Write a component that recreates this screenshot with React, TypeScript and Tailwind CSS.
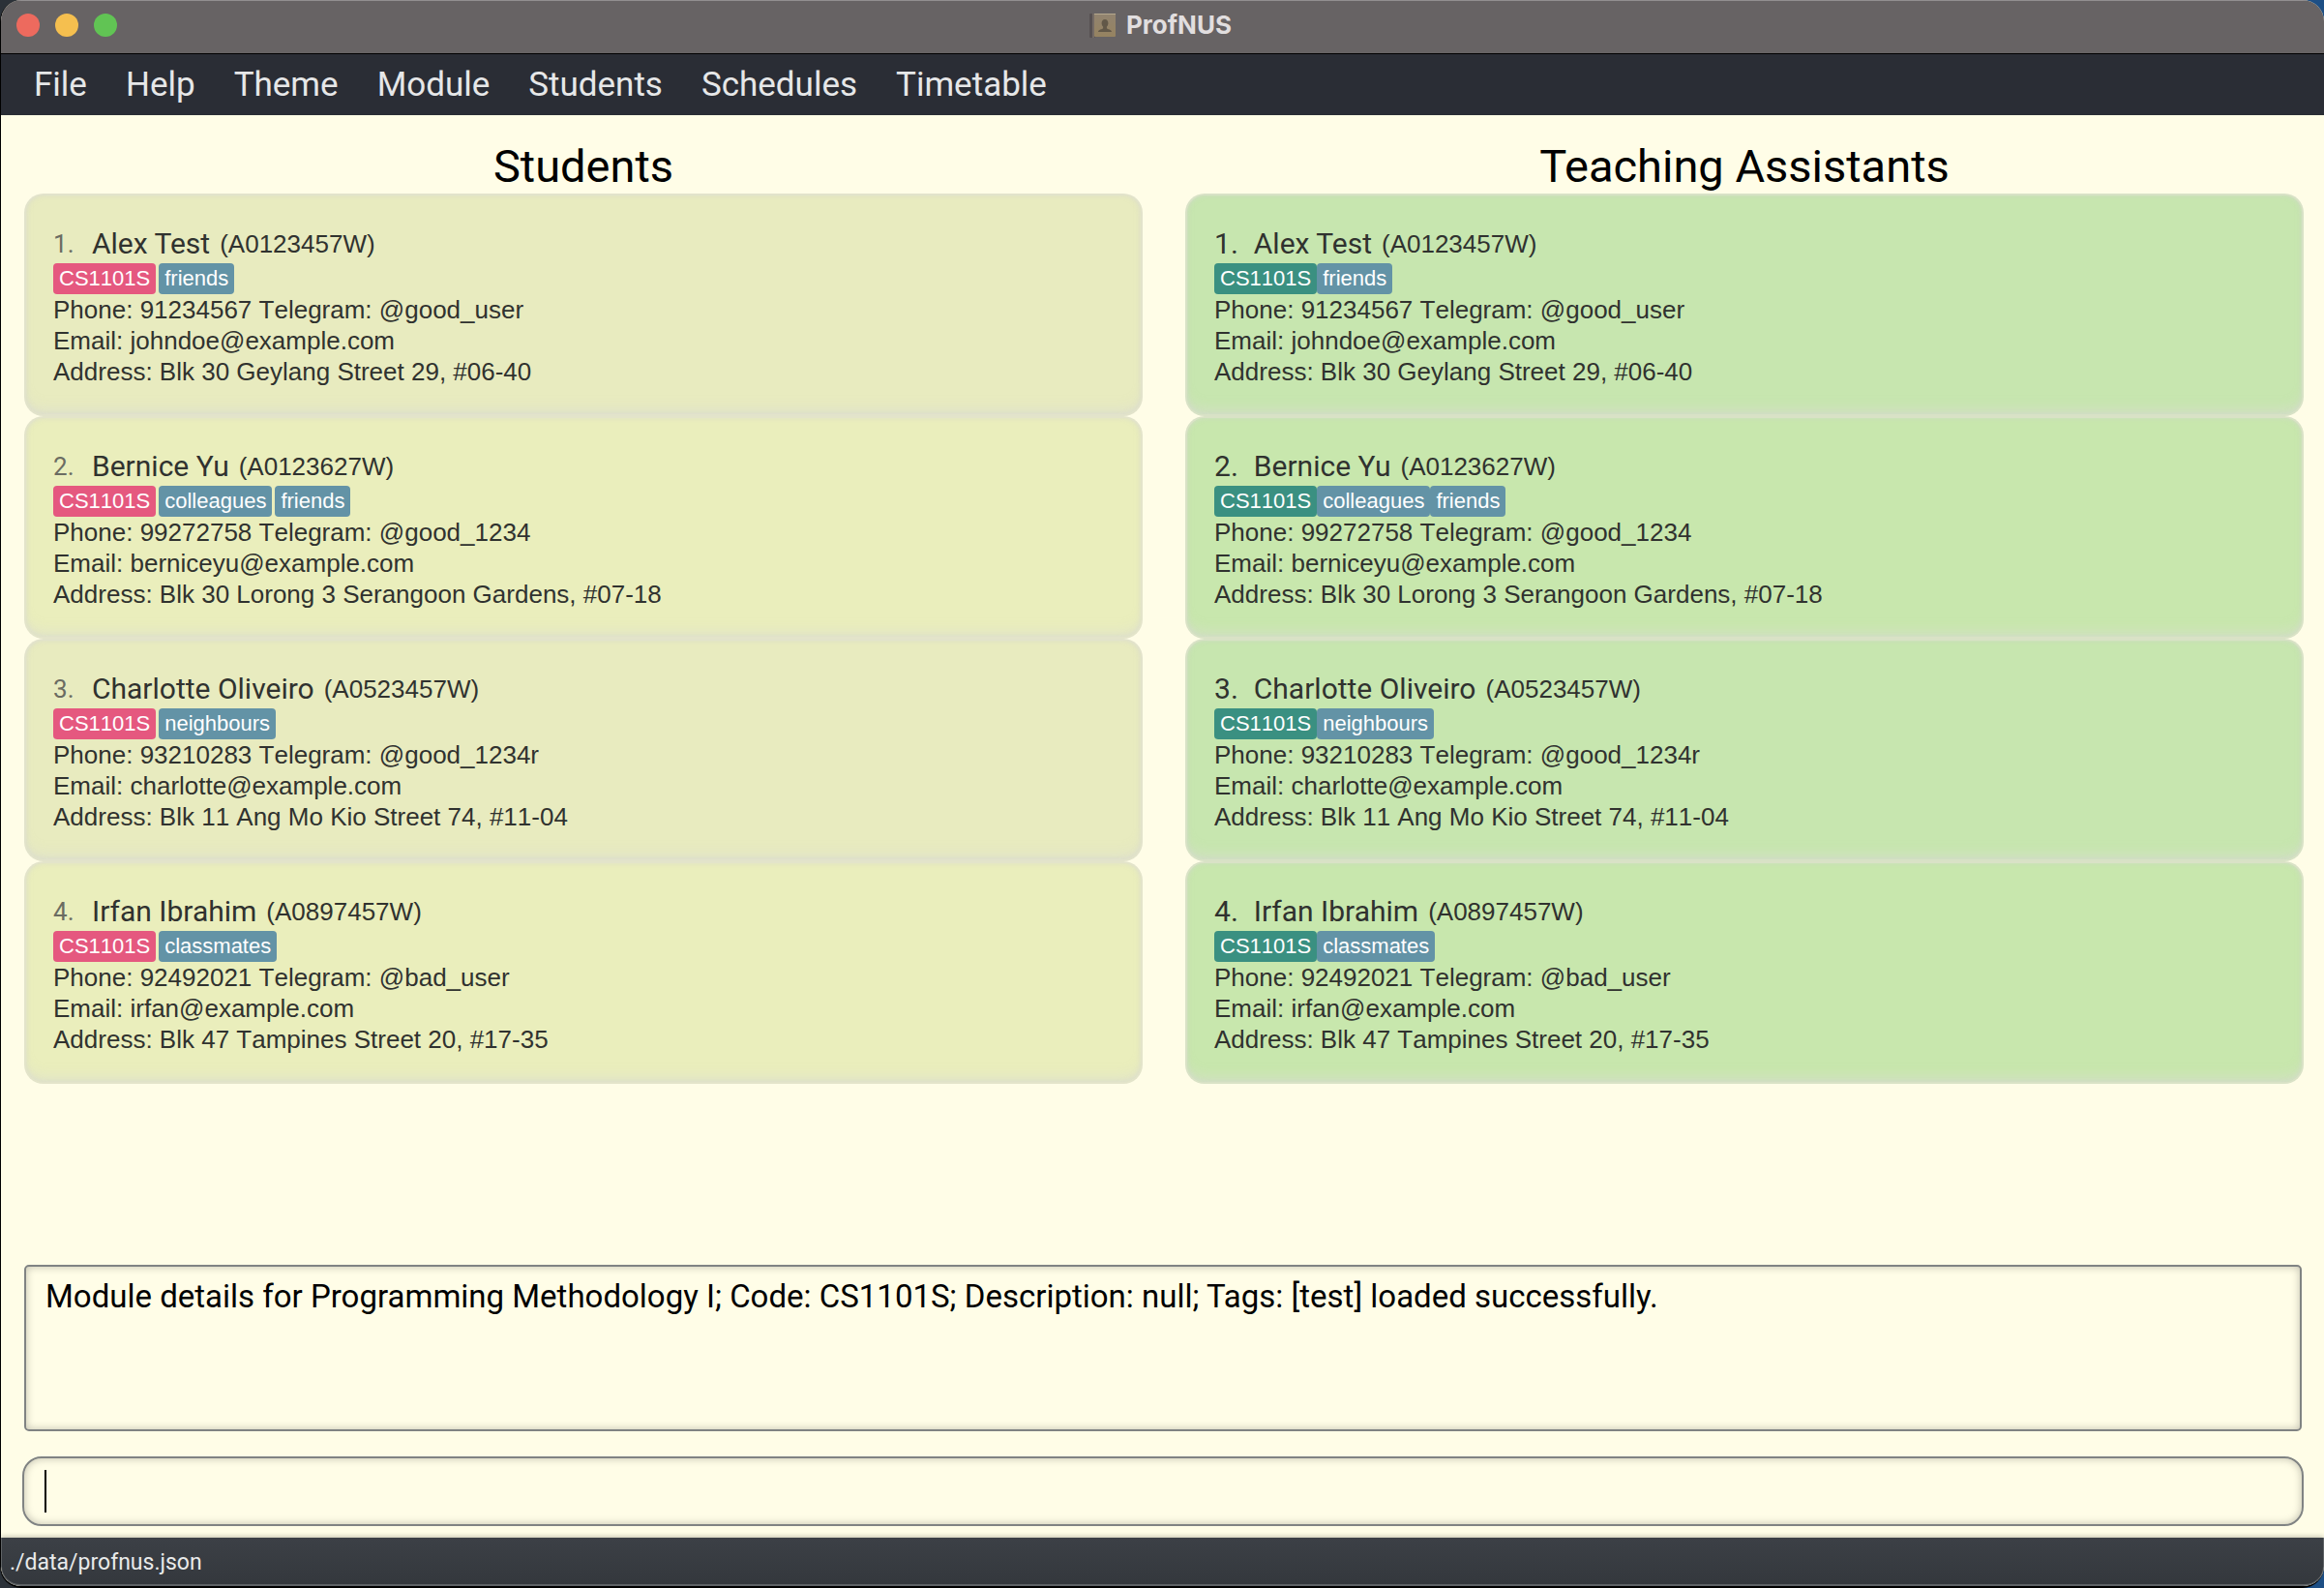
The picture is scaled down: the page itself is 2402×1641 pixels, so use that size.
import React from "react";

type Person = {
  name: string;
  id: string;
  tags: string[];
  phone: string;
  telegram: string;
  email: string;
  address: string;
};

const PEOPLE: Person[] = [
  {
    name: "Alex Test",
    id: "A0123457W",
    tags: ["friends"],
    phone: "91234567",
    telegram: "@good_user",
    email: "johndoe@example.com",
    address: "Blk 30 Geylang Street 29, #06-40",
  },
  {
    name: "Bernice Yu",
    id: "A0123627W",
    tags: ["colleagues", "friends"],
    phone: "99272758",
    telegram: "@good_1234",
    email: "berniceyu@example.com",
    address: "Blk 30 Lorong 3 Serangoon Gardens, #07-18",
  },
  {
    name: "Charlotte Oliveiro",
    id: "A0523457W",
    tags: ["neighbours"],
    phone: "93210283",
    telegram: "@good_1234r",
    email: "charlotte@example.com",
    address: "Blk 11 Ang Mo Kio Street 74, #11-04",
  },
  {
    name: "Irfan Ibrahim",
    id: "A0897457W",
    tags: ["classmates"],
    phone: "92492021",
    telegram: "@bad_user",
    email: "irfan@example.com",
    address: "Blk 47 Tampines Street 20, #17-35",
  },
];

const MENUS = ["File", "Help", "Theme", "Module", "Students", "Schedules", "Timetable"];

const MESSAGE =
  "Module details for Programming Methodology I; Code: CS1101S; Description: null; Tags: [test] loaded successfully.";

type Kind = "student" | "assistant";

const STYLES = {
  student: {
    card: "odd:bg-[#e8ebbf] even:bg-[#eaeebc]",
    module: "bg-[#e5587f]",
    tags: "gap-[3px]",
    index: "w-10 font-['Roboto',sans-serif] text-[26px] text-[#6b6c62]",
  },
  assistant: {
    card: "odd:bg-[#c7e6af] even:bg-[#c8e7ad]",
    module: "bg-[#3a9081]",
    tags: "",
    index: "mr-4 font-['Roboto',sans-serif] text-[30px]",
  },
};

function AppIcon() {
  return (
    <svg width="28" height="27" viewBox="0 0 28 27" aria-hidden="true">
      <defs>
        <linearGradient id="cover" x1="0" y1="0" x2="0" y2="1">
          <stop offset="0" stopColor="#918370" />
          <stop offset="1" stopColor="#968360" />
        </linearGradient>
      </defs>
      <rect x="0" y="1" width="6" height="25" rx="1" fill="#575152" />
      <rect x="3" y="1" width="2" height="25" fill="#746b65" />
      <rect x="5" y="1" width="22" height="24" rx="1" fill="url(#cover)" />
      <path d="M5 1.500h22" stroke="#b5a88e" strokeWidth="1" />
      <path
        d="M16 7c2.300 0 3.400 1.700 3.400 4 0 1.600-.7 2.800-1.500 3.600v1.600c.6 1 5.100 1.200 5.100 3.800H9c0-2.600 4.500-2.800 5.100-3.800v-1.600c-.8-.8-1.500-2-1.500-3.600 0-2.300 1.100-4 3.400-4z"
        fill="#625848"
      />
    </svg>
  );
}

function TitleBar() {
  return (
    <header className="relative flex h-14 shrink-0 items-center justify-center border-t border-b border-t-[#928f90] border-b-black bg-[#676364] pr-1 pb-1">
      <div className="absolute inset-y-0 left-4 flex items-center gap-4 pb-1">
        <button aria-label="Close" className="size-6 rounded-full bg-[#ed6a5e]" />
        <button aria-label="Minimize" className="size-6 rounded-full bg-[#f5bf4f]" />
        <button aria-label="Zoom" className="size-6 rounded-full bg-[#61c454]" />
      </div>
      <div className="flex items-center gap-[10px]">
        <AppIcon />
        <h1 className="font-['Inter',sans-serif] text-[26px] leading-8 font-bold text-[#e1dedf]">ProfNUS</h1>
      </div>
    </header>
  );
}

function MenuBar() {
  return (
    <nav className="flex h-[63px] shrink-0 items-center gap-10 bg-[#2a2d35] px-[34px]">
      {MENUS.map((m) => (
        <button key={m} className="font-['Roboto',sans-serif] text-[35px] leading-10 text-[#e6e7e8]">
          {m}
        </button>
      ))}
    </nav>
  );
}

function Tag({ text, color }: { text: string; color: string }) {
  return <span className={`rounded-[4px] px-[6px] text-[22px] leading-8 text-white ${color}`}>{text}</span>;
}

function PersonCard({ person, index, kind }: { person: Person; index: number; kind: Kind }) {
  const s = STYLES[kind];
  return (
    <li
      className={`flex flex-col rounded-[20px] border-2 border-[#dfe0d0]/70 px-7 pt-8 pb-7 text-[26px] leading-8 text-[#30322f] shadow-[inset_0_0_5px_rgba(211,211,211,0.6),inset_0_-12px_12px_-6px_rgba(220,222,212,0.5)] [font-kerning:none] ${s.card}`}
    >
      <div className="flex h-[38px] items-center pb-[2px]">
        <span className={s.index}>{index}.</span>
        <h3 className="mr-[10px] font-['Roboto',sans-serif] text-[30px] [font-kerning:normal]">{person.name}</h3>
        <span>({person.id})</span>
      </div>
      <div className={`flex ${s.tags}`}>
        <Tag text="CS1101S" color={s.module} />
        {person.tags.map((t) => (
          <Tag key={t} text={t} color="bg-[#6393a6]" />
        ))}
      </div>
      <p>
        Phone: {person.phone} Telegram: {person.telegram}
      </p>
      <p>Email: {person.email}</p>
      <p>Address: {person.address}</p>
    </li>
  );
}

function PersonPanel({ title, kind }: { title: string; kind: Kind }) {
  return (
    <section className="flex min-w-0 flex-1 flex-col">
      <h2 className="text-center font-['Roboto',sans-serif] text-[47px] leading-[56px] text-black">{title}</h2>
      <ul className="flex flex-col">
        {PEOPLE.map((p, i) => (
          <PersonCard key={p.id} person={p} index={i + 1} kind={kind} />
        ))}
      </ul>
    </section>
  );
}

export default function App() {
  return (
    <div className="min-h-screen bg-[linear-gradient(to_right,#2b3138_50%,#1d4f85_50%)] font-['Liberation_Sans',sans-serif]">
      <div className="flex min-h-screen flex-col overflow-hidden rounded-[22px] border-b-2 border-l border-black bg-[#fffde7]">
        <TitleBar />
        <MenuBar />
        <main className="flex flex-1 flex-col">
          <div className="flex flex-1 gap-11 pt-[25px] pr-[21px] pl-6">
            <PersonPanel title="Students" kind="student" />
            <PersonPanel title="Teaching Assistants" kind="assistant" />
          </div>
          <textarea
            readOnly
            aria-label="Result"
            value={MESSAGE}
            className="mr-[23px] ml-6 block h-[172px] resize-none rounded-[5px] border-2 border-[#808383] px-5 pt-[11px] font-['Roboto',sans-serif] text-[33px] leading-10 text-black shadow-[inset_0_0_8px_rgba(0,0,0,0.25)] outline-none"
          />
          <div className="mt-[26px] mr-[21px] mb-3 ml-[22px] flex h-[72px] items-center rounded-[20px] border-2 border-[#808383] px-[21px] shadow-[inset_0_0_8px_rgba(0,0,0,0.25)]">
            <span className="h-11 w-[2px] bg-black" />
            <input
              type="text"
              aria-label="Command"
              className="h-full min-w-0 flex-1 bg-transparent font-['Roboto',sans-serif] text-[33px] text-black outline-none"
            />
          </div>
        </main>
        <footer className="flex h-[50px] shrink-0 items-center rounded-b-[20px] border-r border-b-2 border-l border-[#5f6366] bg-gradient-to-b from-[#3c4046] to-[#34383d] px-2 shadow-[0_-1px_5px_rgba(0,0,0,0.25)]">
          <span className="pt-1 font-['Roboto',sans-serif] text-[23px] leading-8 text-[#e9eaea]">./data/profnus.json</span>
        </footer>
      </div>
    </div>
  );
}
